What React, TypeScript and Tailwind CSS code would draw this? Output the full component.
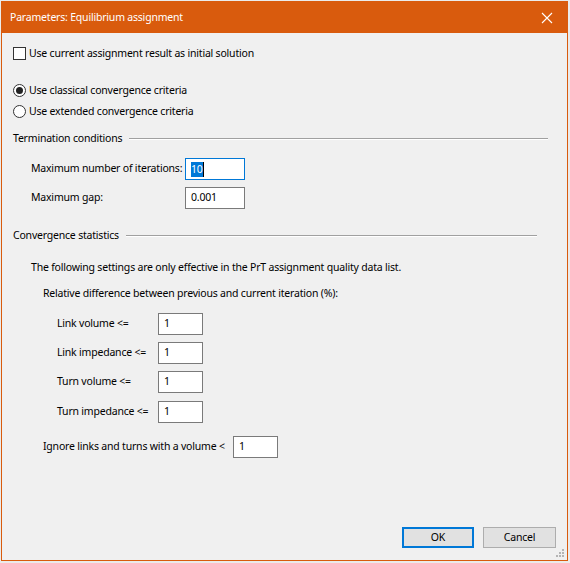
import React from "react";

function NumberBox({ value, width, focused }: { value: string; width: string; focused?: boolean }) {
  return (
    <div
      className={
        "h-[22px] bg-white flex items-center pl-[5px] " +
        width +
        (focused ? " border border-[#0078d7]" : " border border-[#7a7a7a]")
      }
    >
      {focused ? (
        <>
          <span className="bg-[#0078d7] text-white leading-[15px]">{value}</span>
          <span className="w-px h-[15px] bg-black" />
        </>
      ) : (
        <span>{value}</span>
      )}
    </div>
  );
}

function Radio({ checked, label }: { checked?: boolean; label: string }) {
  return (
    <div className="flex items-center h-[13px]">
      <div className="w-[13px] h-[13px] rounded-full border border-[#333] bg-white flex items-center justify-center">
        {checked && <div className="w-[7px] h-[7px] rounded-full bg-[#222]" />}
      </div>
      <span className="ml-[3px] whitespace-nowrap">{label}</span>
    </div>
  );
}

function GroupHeading({ label, endGap }: { label: string; endGap: string }) {
  return (
    <div className={"flex items-center h-[16px] " + endGap}>
      <span className="whitespace-nowrap">{label}</span>
      <div className="flex-1 ml-[7px] mt-[-1px] flex flex-col">
        <div className="h-px bg-[#a0a0a0]" />
        <div className="h-px bg-white" />
      </div>
    </div>
  );
}

function LimitRow({ label, mt }: { label: string; mt: string }) {
  return (
    <div className={"flex items-center h-[22px] pl-[44px] " + mt}>
      <span className="w-[101px] whitespace-nowrap">{label}</span>
      <NumberBox value="1" width="w-[45px]" />
    </div>
  );
}

export default function App() {
  return (
    <div className="w-[570px] h-[563px] bg-[#ebebeb] pt-px pl-px font-['Noto_Sans',sans-serif] text-[10.5px] tracking-[-0.2px] text-black">
      <div className="relative w-[567px] h-[560px] border border-[#d95b0d] bg-[#f0f0f0] flex flex-col">
        {/* title bar */}
        <div className="h-[31px] bg-[#d95b0d] flex items-center pl-[8px] pr-[10px] text-white">
          <span className="flex-1 whitespace-nowrap">Parameters: Equilibrium assignment</span>
          <svg width="12" height="12" viewBox="0 0 12 12" className="mr-[4px]">
            <path d="M1 1 L11 11 M11 1 L1 11" stroke="white" strokeWidth="1.1" fill="none" />
          </svg>
        </div>

        <div className="flex-1 flex flex-col pl-[11px] pr-[10px]">
          {/* initial solution */}
          <div className="flex items-center h-[13px] mt-[14px]">
            <div className="w-[13px] h-[13px] border border-[#333] bg-white" />
            <span className="ml-[3px] whitespace-nowrap">Use current assignment result as initial solution</span>
          </div>

          {/* convergence criteria */}
          <div className="mt-[24px]">
            <Radio checked label="Use classical convergence criteria" />
          </div>
          <div className="mt-[8px]">
            <Radio label="Use extended convergence criteria" />
          </div>

          <div className="mt-[13px]">
            <GroupHeading label="Termination conditions" endGap="mr-[9px]" />
          </div>

          <div className="flex items-center h-[22px] mt-[11px] pl-[18px]">
            <span className="w-[154px] whitespace-nowrap">Maximum number of iterations:</span>
            <NumberBox value="10" width="w-[60px]" focused />
          </div>
          <div className="flex items-center h-[22px] mt-[7px] pl-[18px]">
            <span className="w-[154px] whitespace-nowrap">Maximum gap:</span>
            <NumberBox value="0.001" width="w-[60px]" />
          </div>

          <div className="mt-[19px]">
            <GroupHeading label="Convergence statistics" endGap="mr-[20px]" />
          </div>

          <div className="h-[16px] mt-[16px] pl-[18px] flex items-center whitespace-nowrap">
            The following settings are only effective in the PrT assignment quality data list.
          </div>
          <div className="h-[16px] mt-[10px] pl-[30px] flex items-center whitespace-nowrap">
            Relative difference between previous and current iteration (%):
          </div>

          <LimitRow label="Link volume <=" mt="mt-[11px]" />
          <LimitRow label="Link impedance <=" mt="mt-[7px]" />
          <LimitRow label="Turn volume <=" mt="mt-[7px]" />
          <LimitRow label="Turn impedance <=" mt="mt-[8px]" />

          <div className="flex items-center h-[22px] mt-[13px] pl-[30px]">
            <span className="w-[190px] whitespace-nowrap">Ignore links and turns with a volume &lt;</span>
            <NumberBox value="1" width="w-[45px]" />
          </div>

          {/* dialog buttons */}
          <div className="mt-auto mb-[12px] flex justify-end gap-[9px] pr-px">
            <div className="w-[72px] h-[21px] bg-[#e1e1e1] border-2 border-[#0078d7] flex items-center justify-center">
              OK
            </div>
            <div className="w-[73px] h-[21px] bg-[#e1e1e1] border border-[#adadad] flex items-center justify-center">
              Cancel
            </div>
          </div>
        </div>

        {/* size grip */}
        <svg width="10" height="10" viewBox="0 0 10 10" className="absolute right-[2px] bottom-[2px]">
          <rect x="7" y="1" width="2" height="2" fill="#b4b4b4" />
          <rect x="4" y="4" width="2" height="2" fill="#b4b4b4" />
          <rect x="7" y="4" width="2" height="2" fill="#b4b4b4" />
          <rect x="1" y="7" width="2" height="2" fill="#b4b4b4" />
          <rect x="4" y="7" width="2" height="2" fill="#b4b4b4" />
          <rect x="7" y="7" width="2" height="2" fill="#b4b4b4" />
        </svg>
      </div>
    </div>
  );
}
